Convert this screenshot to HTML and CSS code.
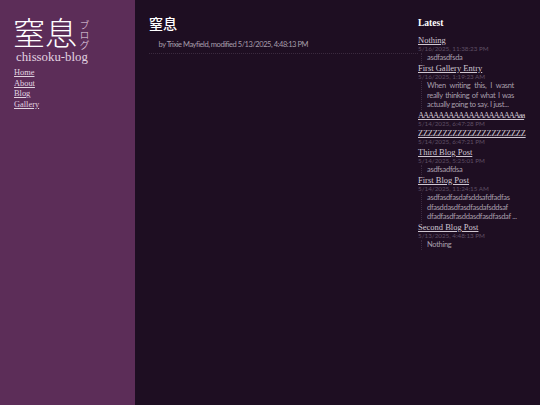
FILE: index.html
```html
<!DOCTYPE html>
<html lang="ja">
<head>
<meta charset="utf-8">
<title>窒息</title>
<link rel="stylesheet" href="styles.css">
</head>
<body>
<div class="page">
  <aside class="sidebar">
    <div class="logo">
      <div class="logo-top">
        <span class="logo-kanji">窒息</span>
        <span class="logo-kana">ブログ</span>
      </div>
      <div class="logo-name">chissoku-blog</div>
    </div>
    <nav class="nav">
      <a href="#">Home</a>
      <a href="#">About</a>
      <a href="#">Blog</a>
      <a href="#">Gallery</a>
    </nav>
  </aside>
  <main class="content">
    <h1 class="title">窒息</h1>
    <div class="byline">by Trixie Mayfield, modified 5/13/2025, 4:48:13 PM</div>
  </main>
  <aside class="latest">
    <h2 class="latest-title">Latest</h2>
    <a class="post-link" href="#">Nothing</a>
    <div class="post-date">5/16/2025, 11:38:23 PM</div>
    <p class="post-text">asdfasdfsda</p>
    <a class="post-link" href="#">First Gallery Entry</a>
    <div class="post-date">5/16/2025, 1:19:23 AM</div>
    <p class="post-text justify">When writing this, I wasnt really thinking of what I was actually going to say. I just...</p>
    <a class="post-link tight-a" href="#">AAAAAAAAAAAAAAAAAAAAaa</a>
    <div class="post-date">5/14/2025, 6:47:28 PM</div>
    <a class="post-link tight-z" href="#">ZZZZZZZZZZZZZZZZZZZZZZ</a>
    <div class="post-date">5/14/2025, 6:47:21 PM</div>
    <a class="post-link" href="#">Third Blog Post</a>
    <div class="post-date">5/14/2025, 5:25:01 PM</div>
    <p class="post-text">asdfsadfdsa</p>
    <a class="post-link" href="#">First Blog Post</a>
    <div class="post-date">5/14/2025, 11:24:15 AM</div>
    <p class="post-text wide">asdfasdfasdafsddsafdfadfas dfasddasdfasdfasdafsddsaf dfadfasdfasddasdfasdfasdaf ...</p>
    <a class="post-link" href="#">Second Blog Post</a>
    <div class="post-date">5/13/2025, 4:48:13 PM</div>
    <p class="post-text">Nothing</p>
  </aside>
</div>
</body>
</html>
```
FILE: styles.css
```css
* { box-sizing: border-box; }
html, body { margin: 0; height: 100%; }
body {
  background: #1e0e22;
  color: #c9c0cb;
  font-family: "Lato", "Noto Sans", sans-serif;
  overflow: hidden;
}
.page { display: flex; height: 405px; }
.sidebar {
  width: 135px;
  flex: none;
  background: #5c2d58;
  padding: 15px 0 0 14px;
}
.logo-top { display: flex; align-items: flex-start; height: 35px; }
.logo-kanji {
  font-family: "Noto Sans CJK JP", serif;
  font-weight: 300;
  font-size: 32px;
  line-height: 32px;
  color: #fff;
  white-space: nowrap;
  margin-left: -1px;
}
.logo-kana {
  font-family: "Noto Sans CJK JP", serif;
  font-weight: 300;
  font-size: 10px;
  line-height: 11px;
  writing-mode: vertical-rl;
  color: #ead9e8;
  margin: 5px 0 0 2px;
}
.logo-name {
  font-family: "Liberation Serif", serif;
  font-size: 12.8px;
  line-height: 15px;
  color: #e2d3e0;
  margin: 0 0 0 2px;
}
.nav { display: flex; flex-direction: column; align-items: flex-start; margin-top: 3px; }
.nav a {
  font-family: "Liberation Serif", serif;
  font-size: 8.4px;
  line-height: 10.5px;
  color: #e0d4e0;
}
.content { width: 283px; flex: none; padding: 15px 0 0 14px; }
.content .title {
  margin: 0;
  font-family: "Noto Sans CJK JP", sans-serif;
  font-size: 14px;
  line-height: 17px;
  font-weight: 500;
  color: #fff;
}
.byline {
  font-size: 7.5px;
  letter-spacing: -0.45px;
  line-height: 10px;
  color: #a89fac;
  margin-top: 8px;
  padding: 0 0 3px 9.5px;
  border-bottom: 1px dotted #3b2a3f;
}
.latest { flex: 1; padding: 16.5px 0 0 0; min-width: 0; }
.latest-title {
  margin: 0 0 5px;
  font-family: "Liberation Serif", serif;
  font-size: 9.5px;
  line-height: 13px;
  font-weight: bold;
  color: #fff;
}
.post-link {
  display: block;
  font-family: "Liberation Serif", serif;
  font-size: 8.5px;
  line-height: 10px;
  color: #d0c7d2;
  white-space: nowrap;
}
.tight-a { letter-spacing: -1.1px; }
.tight-z { letter-spacing: -0.3px; }
.post-date {
  font-size: 6.3px;
  line-height: 8.5px;
  color: #5f4f64;
}
.post-text {
  margin: 0 0 0 3px;
  padding: 0 0 0 5px;
  font-size: 7.5px;
  letter-spacing: -0.3px;
  line-height: 9.5px;
  color: #a89fac;
  border-left: 1px dotted #3b2a3f;
  width: 93px;
}
.post-text.wide { width: 104px; }
.justify { text-align: justify; }
```
